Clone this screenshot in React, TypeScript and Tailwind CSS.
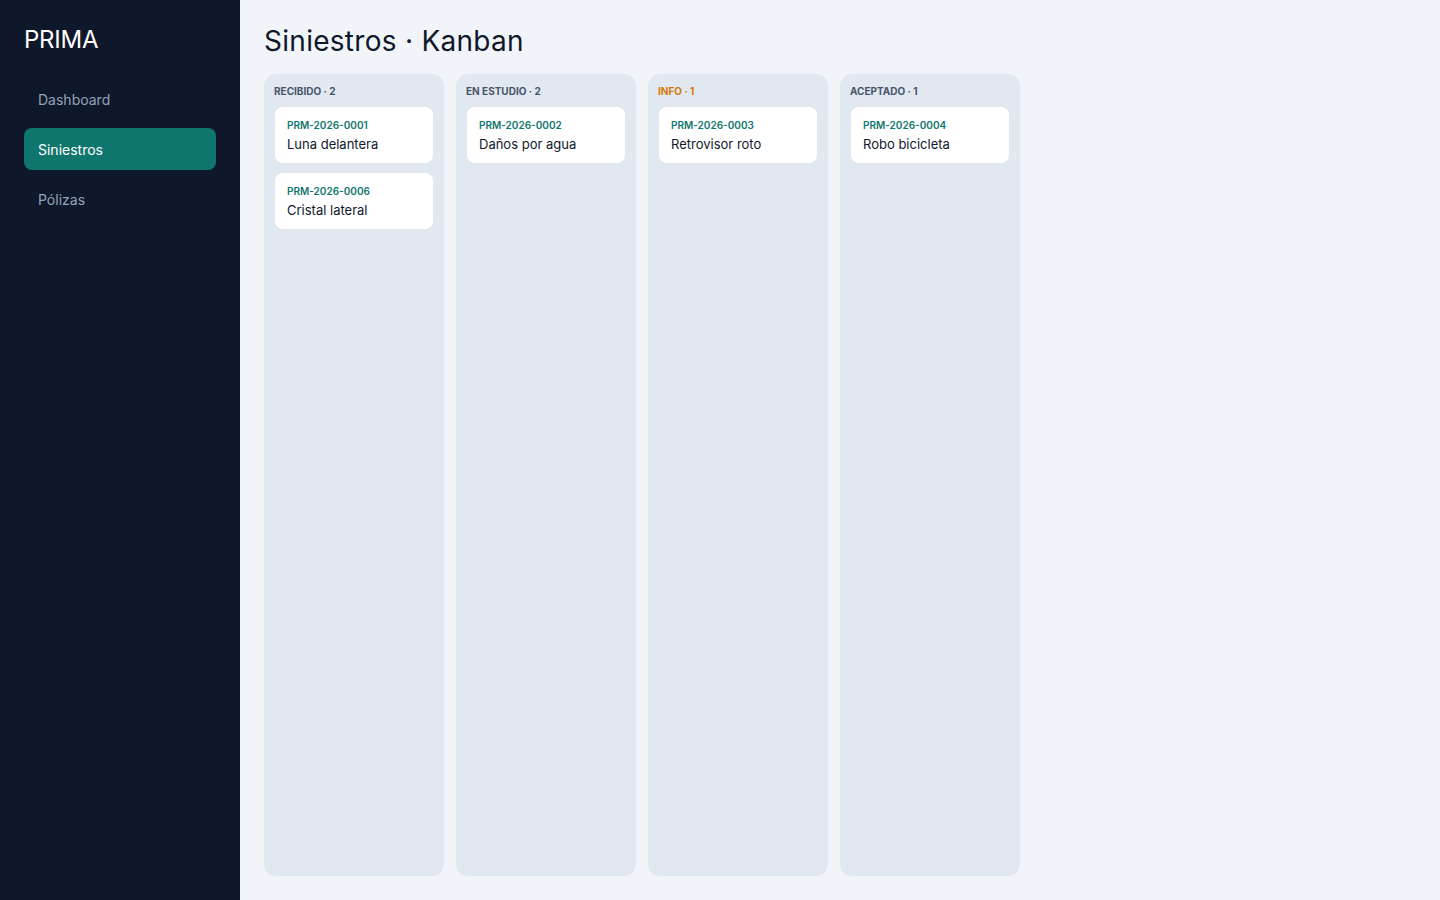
import React from 'react';

type Claim = { id: string; title: string };

type Column = {
  key: string;
  label: string;
  count: number;
  tone?: 'warn';
  claims: Claim[];
};

const columns: Column[] = [
  {
    key: 'recibido',
    label: 'Recibido',
    count: 2,
    claims: [
      { id: 'PRM-2026-0001', title: 'Luna delantera' },
      { id: 'PRM-2026-0006', title: 'Cristal lateral' },
    ],
  },
  {
    key: 'estudio',
    label: 'En estudio',
    count: 2,
    claims: [{ id: 'PRM-2026-0002', title: 'Daños por agua' }],
  },
  {
    key: 'info',
    label: 'Info',
    count: 1,
    tone: 'warn',
    claims: [{ id: 'PRM-2026-0003', title: 'Retrovisor roto' }],
  },
  {
    key: 'aceptado',
    label: 'Aceptado',
    count: 1,
    claims: [{ id: 'PRM-2026-0004', title: 'Robo bicicleta' }],
  },
];

const nav = ['Dashboard', 'Siniestros', 'Pólizas'];

const Sidebar = () => (
  <aside className="w-[240px] shrink-0 bg-[#0f172a] px-6 pt-6">
    <div className="text-[24px] leading-8 text-white tracking-[-0.01em]">PRIMA</div>
    <nav className="mt-[22px] flex flex-col gap-2">
      {nav.map((item) => (
        <a
          key={item}
          className={
            item === 'Siniestros'
              ? 'flex h-[42px] items-center rounded-lg bg-[#0f766e] px-[14px] text-[14px] text-white'
              : 'flex h-[42px] items-center rounded-lg px-[14px] text-[14px] text-[#94a3b8]'
          }
        >
          {item}
        </a>
      ))}
    </nav>
  </aside>
);

const ClaimCard = ({ claim }: { claim: Claim }) => (
  <div className="rounded-lg bg-white px-3 pt-[11px] pb-[10px]">
    <div className="text-[10px] font-semibold leading-[14px] text-[#0f766e]">{claim.id}</div>
    <div className="mt-[3px] text-[13px] leading-[18px] text-[#0f172a]">{claim.title}</div>
  </div>
);

export default function App() {
  return (
    <div
      className="flex h-[900px] bg-[#f1f5f9]"
      style={{ fontFamily: 'Inter, "Noto Sans", sans-serif' }}
    >
      <Sidebar />
      <main className="flex flex-1 flex-col p-6">
        <h1 className="text-[28px] leading-[34px] text-[#0f172a] tracking-[0.01em]">Siniestros · Kanban</h1>
        <div className="mt-4 flex flex-1 gap-3">
          {columns.map((col) => (
            <section key={col.key} className="flex w-[180px] flex-col rounded-xl bg-[#e2e8f0] p-[11px] pt-[10px]">
              <div
                className={
                  col.tone === 'warn'
                    ? '-ml-px mb-[9px] text-[10px] font-bold uppercase leading-[14px] text-[#d97706]'
                    : '-ml-px mb-[9px] text-[10px] font-bold uppercase leading-[14px] text-[#475569]'
                }
              >
                {col.label} · {col.count}
              </div>
              <div className="flex flex-col gap-[10px]">
                {col.claims.map((c) => (
                  <ClaimCard key={c.id} claim={c} />
                ))}
              </div>
            </section>
          ))}
        </div>
      </main>
    </div>
  );
}
